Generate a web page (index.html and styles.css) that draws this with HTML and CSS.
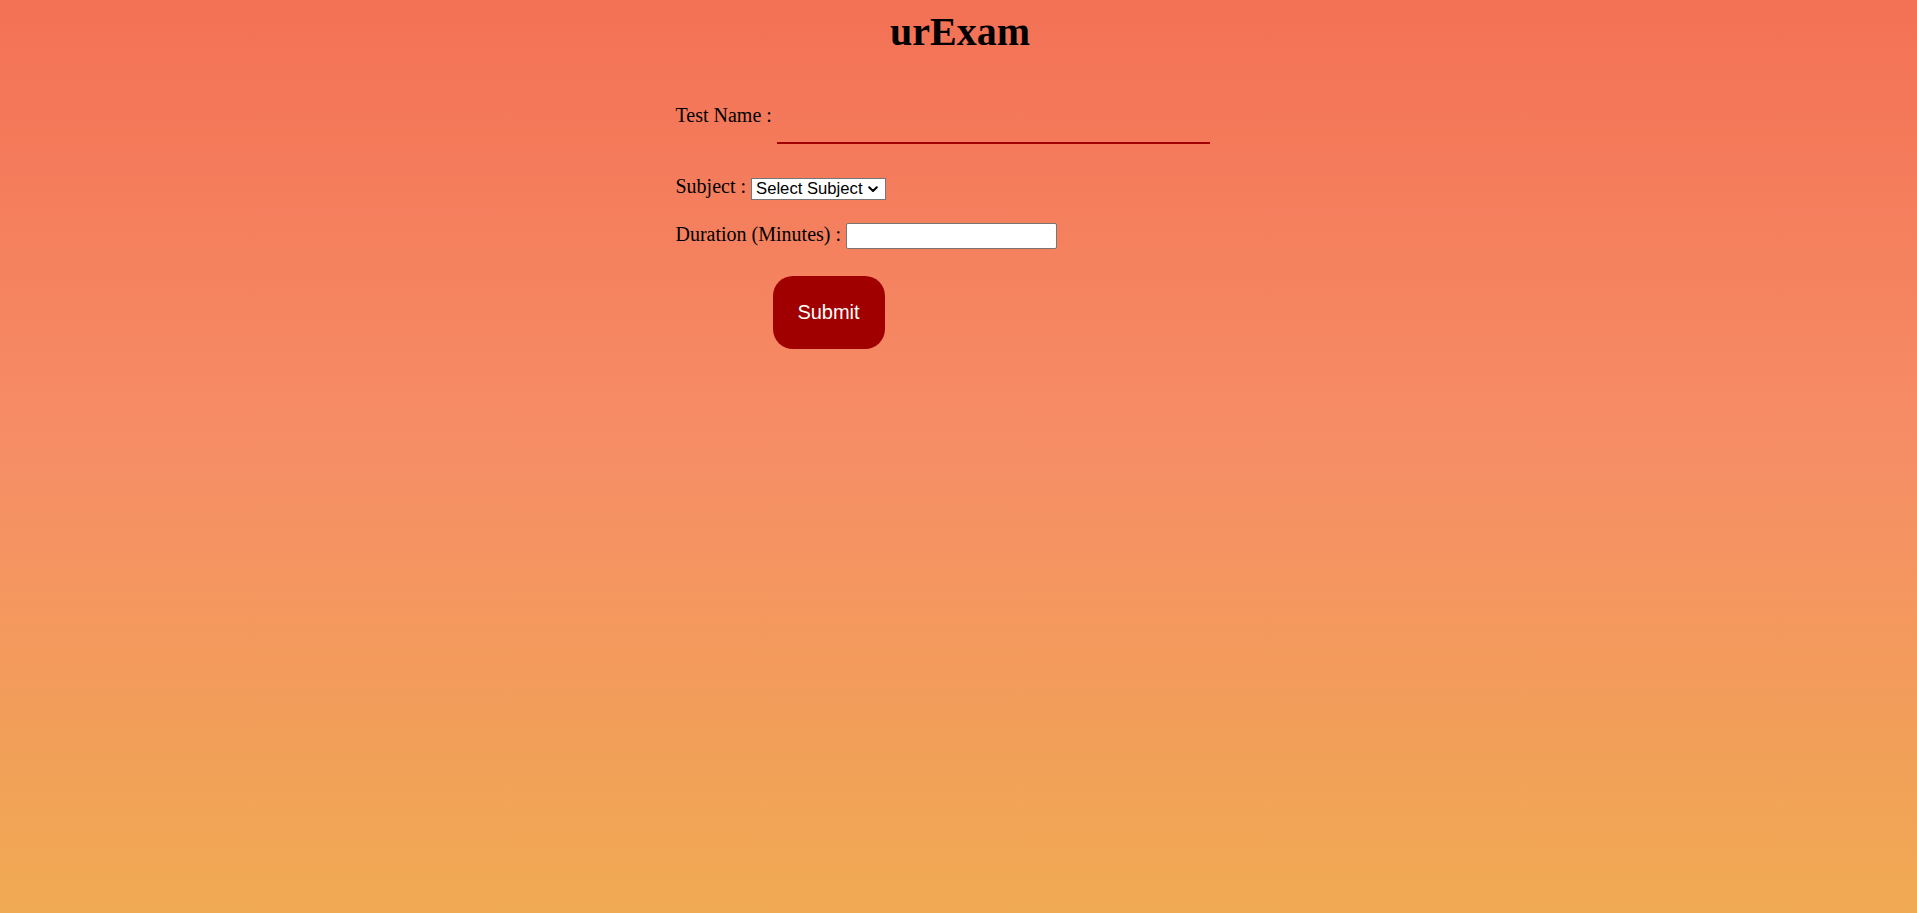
FILE: index.html
```html
<!DOCTYPE html>
<html>
<head>
<meta charset="utf-8">
<title>urExam</title>
<link rel="stylesheet" href="styles.css">
</head>
<body>
<h1 class="title">urExam</h1>
<form class="form">
  <div class="row row-name">
    <label class="label label-name" for="tname">Test Name :</label>
    <input class="name-input" id="tname" type="text">
  </div>
  <div class="row row-subject">
    <label class="label label-subject" for="subj">Subject :</label>
    <span class="select-wrap">
      <select class="subject-select" id="subj">
        <option>Select Subject</option>
      </select>
      <svg class="select-arrow" width="10" height="7" viewBox="0 0 10 7" aria-hidden="true">
        <path d="M1.2 1.2 L5 5 L8.8 1.2" fill="none" stroke="#000" stroke-width="2" stroke-linecap="round" stroke-linejoin="round"/>
      </svg>
    </span>
  </div>
  <div class="row row-duration">
    <label class="label label-duration" for="dur">Duration (Minutes) :</label>
    <input class="duration-input" id="dur" type="text">
  </div>
  <div class="row row-submit">
    <button class="submit-btn" type="button">Submit</button>
  </div>
</form>
</body>
</html>
```

FILE: styles.css
```css
html, body {
  height: 100%;
}
body {
  margin: 0;
  padding-top: 8px;
  box-sizing: border-box;
  min-height: 913px;
  background: linear-gradient(180deg, #f37155 0%, #f68d66 48%, #f0aa52 100%);
  font-family: "Liberation Serif", "Times New Roman", serif;
  font-size: 20px;
  color: #000;
}
.title {
  margin: 0;
  padding-left: 3px;
  text-align: center;
  font-size: 40px;
  font-weight: bold;
  line-height: normal;
}
.form {
  width: 566px;
  margin: 0 auto;
  display: flex;
  flex-direction: column;
}
.row {
  display: flex;
  align-items: flex-end;
}
.label {
  line-height: 23px;
  white-space: pre;
}
.label-name {
  padding-bottom: 17px;
  margin-right: 5px;
}
.label-subject {
  padding-bottom: 1.5px;
  margin-right: 5px;
}
.label-duration {
  padding-bottom: 3px;
  margin-right: 5px;
}
.row-name {
  margin-top: 48.5px;
}
.row-subject {
  margin-top: 31.5px;
}
.row-duration {
  margin-top: 23px;
}
.row-submit {
  margin-top: 27.5px;
  padding-left: 97px;
}
.name-input {
  box-sizing: border-box;
  width: 433px;
  height: 40px;
  border: none;
  border-bottom: 2px solid #a30000;
  background: transparent;
  outline: none;
  font-family: "Liberation Sans", Arial, sans-serif;
  font-size: 20px;
  padding: 0 4px;
}
.select-wrap {
  position: relative;
  display: inline-flex;
}
.subject-select {
  box-sizing: border-box;
  width: 135px;
  height: 22px;
  border: 1px solid #767676;
  border-radius: 0;
  background: #fff;
  -webkit-appearance: none;
  appearance: none;
  font-family: "Liberation Sans", Arial, sans-serif;
  font-size: 16.67px;
  line-height: 19px;
  color: #000;
  padding: 0 0 0 4px;
  margin: 0;
}
.select-arrow {
  position: absolute;
  right: 8px;
  top: 8px;
  pointer-events: none;
}
.duration-input {
  box-sizing: border-box;
  width: 211px;
  height: 25.5px;
  border: 1px solid #767676;
  border-radius: 2px;
  background: #fff;
  font-family: "Liberation Sans", Arial, sans-serif;
  font-size: 16.67px;
  padding: 1px 3px;
  margin: 0;
}
.submit-btn {
  box-sizing: border-box;
  width: 112px;
  height: 73px;
  border: none;
  border-radius: 20px;
  background: #a00000;
  color: #fff;
  font-family: "Liberation Sans", Arial, sans-serif;
  font-size: 20px;
  line-height: 23px;
  padding: 0;
  cursor: pointer;
}
```
